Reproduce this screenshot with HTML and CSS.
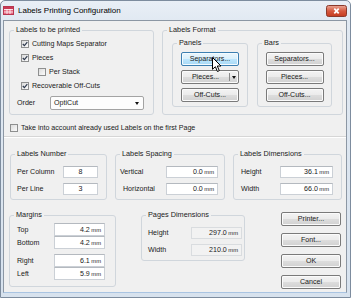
FILE: index.html
```html
<!DOCTYPE html>
<html>
<head>
<meta charset="utf-8">
<link rel="stylesheet" href="styles.css">
</head>
<body>
<div class="window">
  <div class="titlebar">
    <svg class="appicon" width="11" height="9" viewBox="0 0 11 9"><rect x="0.5" y="0.5" width="10" height="8" fill="#e86a82" stroke="#b8364f"/><rect x="1" y="1" width="9" height="2" fill="#c93a55"/><path d="M1 3.5H10M1 6H10M4 3V8M7 3V8" stroke="#fff" stroke-width="0.8"/></svg>
    <span class="title">Labels Printing Configuration</span>
    <span class="close"><svg width="21" height="12" viewBox="0 0 21 12"><defs><linearGradient id="cg" x1="0" y1="0" x2="0" y2="1"><stop offset="0" stop-color="#eaa898"/><stop offset="0.5" stop-color="#d65a40"/><stop offset="1" stop-color="#c43b1f"/></linearGradient></defs><rect x="0.5" y="0.5" width="20" height="11" rx="2" fill="url(#cg)" stroke="#8b3a2c"/><path d="M8.3 3.6 L12.7 8.4 M12.7 3.6 L8.3 8.4" stroke="#fff" stroke-width="1.7"/></svg></span>
  </div>
  <div class="client">
    <div class="row1">
      <fieldset class="grp g-print">
        <legend>Labels to be printed</legend>
        <div class="print-body">
          <div class="chk"><span class="cb"><svg viewBox="0 0 6 6"><path d="M0.8 3 L2.4 4.7 L5.3 1.1" fill="none" stroke="#2f3a4e" stroke-width="1.2"/></svg></span>Cutting Maps Separator</div>
          <div class="chk"><span class="cb"><svg viewBox="0 0 6 6"><path d="M0.8 3 L2.4 4.7 L5.3 1.1" fill="none" stroke="#2f3a4e" stroke-width="1.2"/></svg></span>Pieces</div>
          <div class="chk indent"><span class="cb"></span>Per Stack</div>
          <div class="chk"><span class="cb"><svg viewBox="0 0 6 6"><path d="M0.8 3 L2.4 4.7 L5.3 1.1" fill="none" stroke="#2f3a4e" stroke-width="1.2"/></svg></span>Recoverable Off-Cuts</div>
          <div class="order-row">
            <span class="order-label">Order</span>
            <div class="combo"><span class="combo-text">OptiCut</span><span class="tri"></span></div>
          </div>
        </div>
      </fieldset>
      <fieldset class="grp g-format">
        <legend>Labels Format</legend>
        <div class="format-body">
          <fieldset class="grp g-sub">
            <legend>Panels</legend>
            <div class="btn-stack">
              <div class="btn hot">Separators...</div>
              <div class="btn split"><span class="split-main">Pieces...</span><span class="split-div"></span><span class="split-arrow"><span class="tri"></span></span></div>
              <div class="btn">Off-Cuts...</div>
            </div>
          </fieldset>
          <fieldset class="grp g-sub g-bars">
            <legend>Bars</legend>
            <div class="btn-stack">
              <div class="btn">Separators...</div>
              <div class="btn">Pieces...</div>
              <div class="btn">Off-Cuts...</div>
            </div>
          </fieldset>
        </div>
      </fieldset>
    </div>

    <div class="chk take"><span class="cb"></span>Take into account already used Labels on the first Page</div>
    <div class="etched"></div>

    <div class="row3">
      <fieldset class="grp g-num">
        <legend>Labels Number</legend>
        <div class="fields">
          <div class="field"><span>Per Column</span><span class="edit center w35">8</span></div>
          <div class="field"><span>Per Line</span><span class="edit center w35">3</span></div>
        </div>
      </fieldset>
      <fieldset class="grp g-spc">
        <legend>Labels Spacing</legend>
        <div class="fields">
          <div class="field"><span>Vertical</span><span class="edit w52">0.0<span class="mm">mm</span></span></div>
          <div class="field"><span class="hind">Horizontal</span><span class="edit w52">0.0<span class="mm">mm</span></span></div>
        </div>
      </fieldset>
      <fieldset class="grp g-dim">
        <legend>Labels Dimensions</legend>
        <div class="fields">
          <div class="field"><span>Height</span><span class="edit w53">36.1<span class="mm">mm</span></span></div>
          <div class="field"><span>Width</span><span class="edit w53">66.0<span class="mm">mm</span></span></div>
        </div>
      </fieldset>
    </div>

    <div class="row4">
      <fieldset class="grp g-marg">
        <legend>Margins</legend>
        <div class="marg-body">
          <div class="pair">
            <div class="field13"><span>Top</span><span class="edit h13 w51">4.2<span class="mm">mm</span></span></div>
            <div class="field13"><span>Bottom</span><span class="edit h13 w51">4.2<span class="mm">mm</span></span></div>
          </div>
          <div class="pair">
            <div class="field13"><span>Right</span><span class="edit h13 w51">6.1<span class="mm">mm</span></span></div>
            <div class="field13"><span>Left</span><span class="edit h13 w51">5.9<span class="mm">mm</span></span></div>
          </div>
        </div>
      </fieldset>
      <fieldset class="grp g-pages">
        <legend>Pages Dimensions</legend>
        <div class="fields pages-fields">
          <div class="field"><span>Height</span><span class="edit dis w51">297.0<span class="mm">mm</span></span></div>
          <div class="field"><span>Width</span><span class="edit dis w51">210.0<span class="mm">mm</span></span></div>
        </div>
      </fieldset>
      <div class="btn-col">
        <div class="btn wide">Printer...</div>
        <div class="btn wide">Font...</div>
        <div class="btn wide">OK</div>
        <div class="btn wide">Cancel</div>
      </div>
    </div>

    <svg class="cursor" width="11" height="16" viewBox="0 0 11 16"><path d="M0.5 0.5 V12.3 L3.4 9.7 L5.4 14.5 L7.3 13.7 L5.3 9 H9 Z" fill="#fff" stroke="#000" stroke-width="1" stroke-linejoin="miter"/></svg>
  </div>
</div>
</body>
</html>
```

FILE: styles.css
```css
* { box-sizing: border-box; }

html, body {
  margin: 0;
  padding: 0;
}

body {
  width: 351px;
  height: 298px;
  overflow: hidden;
  font-family: "Liberation Sans", Arial, sans-serif;
  font-size: 7.1px;
  color: #1a1a1a;
  background: #ffffff;
}

.window {
  width: 351px;
  height: 298px;
  border: 1px solid #7d8c9e;
  border-radius: 5px 5px 0 0;
  padding: 0 3px 4px 2px;
  background: linear-gradient(#e9eff6 0, #e1e9f2 20px, #d7e2ee 100%);
  display: flex;
  flex-direction: column;
}

.titlebar {
  height: 19px;
  display: flex;
  align-items: center;
}

.appicon {
  display: block;
  margin-right: 4px;
}

.title {
  font-size: 8px;
  color: #000;
  line-height: 10px;
}

.close {
  margin-left: auto;
  display: flex;
}

.client {
  position: relative;
  width: 344px;
  height: 273px;
  border: 1px solid #8c97a4;
  border-bottom-color: #a9c4e2;
  background: #f0f0f0;
  padding-top: 4px;
}

/* group boxes */
.grp {
  margin: 0;
  padding: 0;
  min-width: 0;
  border: 1px solid #d0d6dc;
  border-radius: 3px;
}

.grp legend {
  margin-left: 4px;
  padding: 0 2px;
  line-height: 10px;
  font-size: 7.3px;
}

.row1 {
  display: flex;
  gap: 8px;
  margin-left: 5px;
}

.g-print { width: 145px; height: 90px; }
.g-format { width: 181px; height: 90px; }

.print-body {
  padding: 2px 0 0 11px;
}

.chk {
  display: flex;
  align-items: center;
  height: 14px;
  gap: 2px;
  white-space: nowrap;
}

.chk.indent { margin-left: 17px; }

.cb {
  width: 8px;
  height: 8px;
  border: 1px solid #8e8f8f;
  background: linear-gradient(135deg, #dcdcdc, #fbfbfb);
  display: flex;
  margin-right: 1px;
}

.cb svg {
  width: 6px;
  height: 6px;
  display: block;
}

.order-row {
  display: flex;
  align-items: center;
  margin-top: 3px;
  margin-left: -4px;
  height: 14px;
}

.order-label { width: 33px; }

.combo {
  width: 94px;
  height: 14px;
  border: 1px solid #a3a3a3;
  border-radius: 2px;
  background: #fdfdfd;
  display: flex;
  align-items: center;
  padding: 0 4px 0 3px;
}

.combo-text { flex: 1; }

.tri {
  width: 0;
  height: 0;
  border-left: 2.5px solid transparent;
  border-right: 2.5px solid transparent;
  border-top: 3px solid #111;
}

.format-body {
  display: flex;
  gap: 9px;
  padding: 3px 0 0 9px;
}

.g-sub { width: 76px; height: 69px; }
.g-bars { width: 75px; }

.btn-stack {
  display: flex;
  flex-direction: column;
  align-items: center;
  gap: 4px;
  padding-top: 4px;
}

.btn {
  width: 58px;
  height: 14px;
  border: 1px solid #7a7a7a;
  border-radius: 2px;
  background: linear-gradient(#f3f3f3 0%, #ebebeb 50%, #dddddd 51%, #d1d1d1 100%);
  box-shadow: inset 0 0 0 1px #fbfbfb;
  display: flex;
  align-items: center;
  justify-content: center;
  white-space: nowrap;
  color: #1a1a1a;
}

.btn.hot {
  border-color: #3c7fb1;
  background: linear-gradient(#eaf6fd 0%, #d9f0fc 50%, #bee6fd 51%, #a7d9f5 100%);
  box-shadow: inset 0 0 0 1px #f4fbff;
}

.btn.split { justify-content: flex-start; }

.split-main {
  flex: 1;
  text-align: center;
}

.split-div {
  width: 1px;
  height: 8px;
  background: #8a8a8a;
}

.split-arrow {
  width: 8px;
  display: flex;
  justify-content: center;
}

.take {
  margin-top: 6px;
  margin-left: 6px;
}

.etched {
  margin-top: 1px;
  height: 2px;
  border-top: 1px solid #d6d6d6;
  border-bottom: 1px solid #ffffff;
}

.row3 {
  display: flex;
  gap: 8px;
  margin-top: 11px;
  margin-left: 6px;
}

.g-num { width: 97px; height: 51px; }
.g-spc { width: 110px; height: 51px; }
.g-dim { width: 109px; height: 51px; }

.fields {
  display: flex;
  flex-direction: column;
  gap: 5px;
  padding-top: 7px;
}

.g-num .fields { padding-left: 6px; padding-right: 8px; }
.g-spc .fields { padding-left: 4px; padding-right: 6px; }
.g-dim .fields { padding-left: 7px; padding-right: 8px; }

.field {
  display: flex;
  align-items: center;
  justify-content: space-between;
  height: 12px;
}

.hind { margin-left: 3px; }

.edit {
  height: 12px;
  border: 1px solid #cbd0d6;
  border-top-color: #b4b9bf;
  background: #fff;
  display: flex;
  align-items: center;
  justify-content: flex-end;
  padding-right: 3px;
  white-space: nowrap;
}

.edit.center {
  justify-content: center;
  padding-right: 0;
}

.edit.h13 { height: 13px; }
.w35 { width: 35px; }
.w51 { width: 51px; }
.w52 { width: 52px; }
.w53 { width: 53px; }

.edit.dis {
  background: #f2f2f2;
  border-color: #d9dcdf;
}

.mm {
  font-size: 5.8px;
  margin-left: 1.5px;
}

.row4 {
  display: flex;
  margin-top: 10px;
  margin-left: 5px;
}

.g-marg { width: 107px; height: 77px; }

.marg-body {
  display: flex;
  flex-direction: column;
  gap: 5px;
  padding: 3px 10px 0 7px;
}

.field13 {
  display: flex;
  align-items: center;
  justify-content: space-between;
  height: 13px;
}

.g-pages {
  width: 104px;
  height: 51px;
  margin-left: 25px;
}

.pages-fields {
  padding-left: 6px;
  padding-right: 2px;
}

.btn-col {
  display: flex;
  flex-direction: column;
  gap: 7px;
  padding-top: 2px;
  margin-left: 36px;
}

.btn.wide { width: 60px; }

.cursor {
  position: absolute;
  left: 208px;
  top: 36px;
}
```
